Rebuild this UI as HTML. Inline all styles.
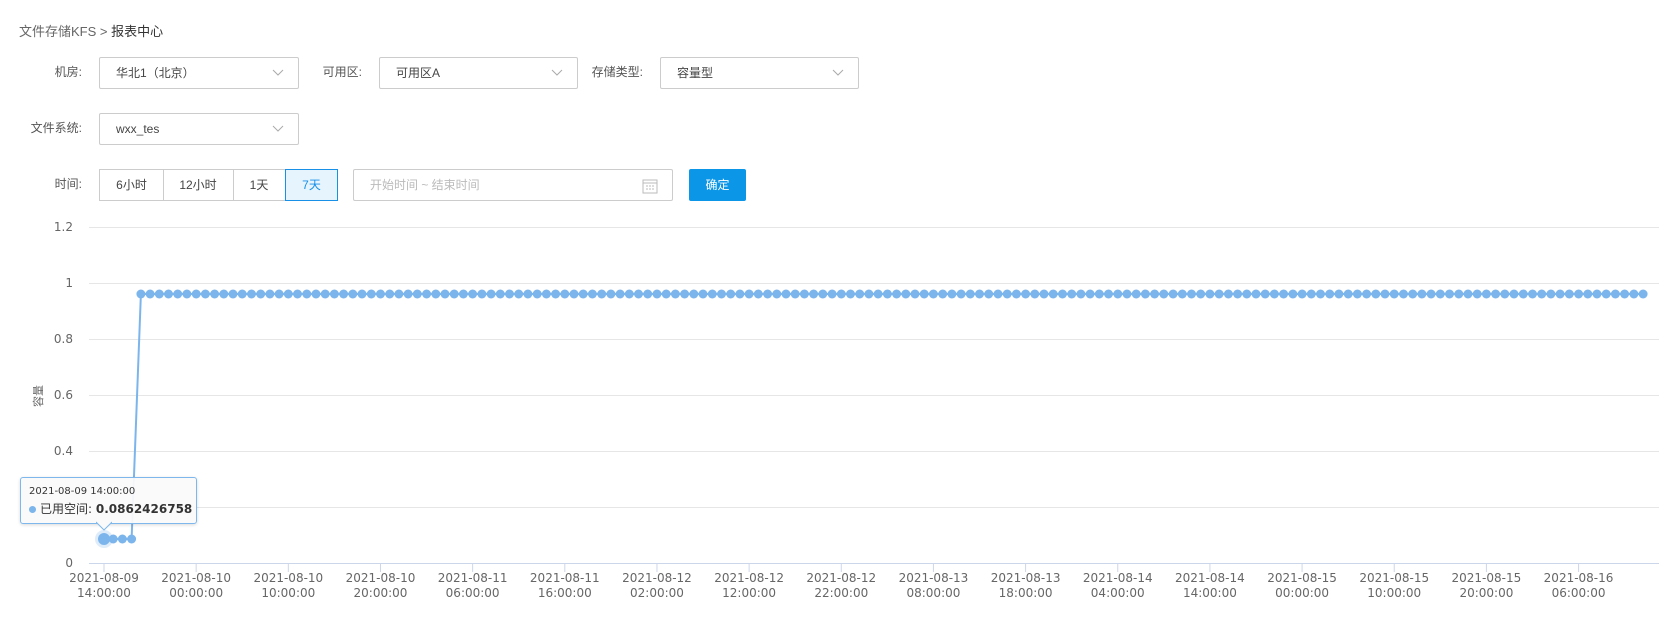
<!DOCTYPE html>
<html><head><meta charset="utf-8">
<style>
body{margin:0;width:1679px;height:634px;background:#fff;font-family:"Liberation Sans","Noto Sans CJK SC",sans-serif;font-size:12px;color:#333;position:relative;overflow:hidden}
.a{position:absolute}
.crumb{left:19px;top:21px;font-size:13px;color:#666}
.crumb b{font-weight:normal;color:#333}
.lbl{text-align:right;width:70px;line-height:31px;color:#555}
.sel{border:1px solid #ccc;border-radius:2px;line-height:30px;box-sizing:border-box;height:32px;padding-left:16px;color:#444}
.sel svg{position:absolute;right:14px;top:11px}
.seg{border:1px solid #ccc;height:32px;box-sizing:border-box;line-height:30px;text-align:center;color:#444}
.btn{background:#0b96e8;color:#fff;text-align:center;line-height:32px;border-radius:2px}
</style></head><body>
<div class="a crumb">文件存储KFS &gt; <b>报表中心</b></div>

<div class="a lbl" style="left:12px;top:57px">机房:</div>
<div class="a sel" style="left:99px;top:57px;width:200px">华北1（北京）<svg width="12" height="8"><path d="M1 1L6 6L11 1" fill="none" stroke="#aaa"/></svg></div>
<div class="a lbl" style="left:292px;top:57px">可用区:</div>
<div class="a sel" style="left:379px;top:57px;width:199px">可用区A<svg width="12" height="8"><path d="M1 1L6 6L11 1" fill="none" stroke="#aaa"/></svg></div>
<div class="a lbl" style="left:573px;top:57px">存储类型:</div>
<div class="a sel" style="left:660px;top:57px;width:199px">容量型<svg width="12" height="8"><path d="M1 1L6 6L11 1" fill="none" stroke="#aaa"/></svg></div>

<div class="a lbl" style="left:12px;top:113px">文件系统:</div>
<div class="a sel" style="left:99px;top:113px;width:200px">wxx_tes<svg width="12" height="8"><path d="M1 1L6 6L11 1" fill="none" stroke="#aaa"/></svg></div>

<div class="a lbl" style="left:12px;top:169px">时间:</div>
<div class="a seg" style="left:99px;top:169px;width:65px">6小时</div>
<div class="a seg" style="left:163px;top:169px;width:71px;border-left:none">12小时</div>
<div class="a seg" style="left:233px;top:169px;width:53px;border-left:none">1天</div>
<div class="a seg" style="left:285px;top:169px;width:53px;border-color:#1890e8;background:#e6f5fd;color:#1890e8">7天</div>
<div class="a sel" style="left:353px;top:169px;width:320px;color:#bbb">开始时间 ~ 结束时间<svg width="16" height="16" style="top:8px;right:14px"><rect x="1" y="2" width="14" height="13" fill="none" stroke="#bbb"/><line x1="1" y1="5" x2="15" y2="5" stroke="#bbb"/><path d="M4 8h2M7 8h2M10 8h2M4 11h2M7 11h2M10 11h2" stroke="#bbb"/></svg></div>
<div class="a btn" style="left:689px;top:169px;width:57px;height:32px">确定</div>

<svg id="c" class="a" style="left:0;top:0" width="1679" height="634" font-family="DejaVu Sans, sans-serif" font-size="12" fill="#666"></svg>

<div class="a" style="left:20px;top:477px;width:175px;height:45px;border:1px solid #7db7ec;border-radius:3px;background:rgba(250,250,250,0.95);box-shadow:0 1px 3px rgba(0,0,0,.15);font-family:'DejaVu Sans','Noto Sans CJK SC',sans-serif;color:#333">
<div style="position:absolute;left:8px;top:8px;font-size:10px">2021-08-09 14:00:00</div>
<div style="position:absolute;left:8px;top:22px;font-size:12px;white-space:nowrap"><span style="display:inline-block;width:7px;height:7px;border-radius:50%;background:#7cb5ec;margin-right:4px"></span>已用空间: <b>0.0862426758</b></div>
</div>
<svg class="a" style="left:96px;top:521px" width="16" height="10"><path d="M0 1L8 9L16 1" fill="#fafafa" stroke="#7db7ec"/></svg>

<script>
var s='',y0=563;
for(var i=0;i<=6;i++){var y=y0-i*56;
 if(i>0)s+='<line x1="89" x2="1659" y1="'+(y+0.5)+'" y2="'+(y+0.5)+'" stroke="#e6e6e6"/>';
 s+='<text x="73" y="'+(y+4)+'" text-anchor="end">'+['0','0.2','0.4','0.6','0.8','1','1.2'][i]+'</text>';}
s+='<line x1="89" x2="1659" y1="563.5" y2="563.5" stroke="#ccd6eb"/>';
var d=['08-09 14','08-10 00','08-10 10','08-10 20','08-11 06','08-11 16','08-12 02','08-12 12','08-12 22','08-13 08','08-13 18','08-14 04','08-14 14','08-15 00','08-15 10','08-15 20','08-16 06'];
for(var k=0;k<17;k++){var x=104+k*10*9.216;
 s+='<line x1="'+x+'" x2="'+x+'" y1="563" y2="572" stroke="#ccd6eb"/>';
 var p=d[k].split(' ');
 s+='<text x="'+x+'" y="582" text-anchor="middle">2021-'+p[0]+'</text><text x="'+x+'" y="597" text-anchor="middle">'+p[1]+':00:00</text>';}
var pts=[];
for(var i=0;i<168;i++){var x=104+i*9.216,y=i<4?539:294;pts.push(x.toFixed(1)+','+y);}
s+='<polyline points="'+pts.join(' ')+'" fill="none" stroke="#7cb5ec" stroke-width="2"/>';
s+='<circle cx="104" cy="539" r="9" fill="#7cb5ec" opacity="0.25"/>';
for(var i=0;i<168;i++){var x=104+i*9.216,y=i<4?539:294;s+='<circle cx="'+x.toFixed(1)+'" cy="'+y+'" r="'+(i==0?6:4.5)+'" fill="#7cb5ec"/>';}
s+='<text transform="translate(42,396) rotate(-90)" text-anchor="middle" font-size="11" font-family="Noto Sans CJK SC,sans-serif">容量</text>';
document.getElementById('c').innerHTML=s;
</script>
</body></html>
